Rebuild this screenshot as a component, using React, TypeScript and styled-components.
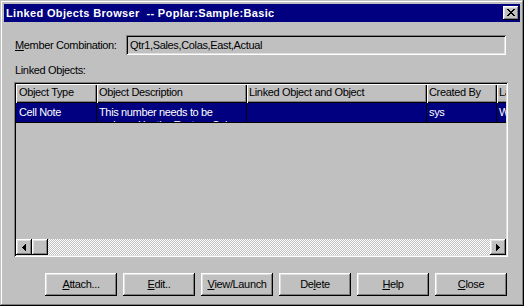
import React from "react";
import styled, { createGlobalStyle } from "styled-components";

const Global = createGlobalStyle`
  html, body { margin: 0; padding: 0; background: #c0c0c0; }
  body {
    font-family: "Liberation Sans", Arial, sans-serif;
    font-size: 11px;
    letter-spacing: -0.35px;
    color: #000;
  }
  * { box-sizing: border-box; }
`;

const raised = `
  box-shadow: inset -1px -1px #000, inset 1px 1px #fff, inset -2px -2px #808080, inset 2px 2px #dfdfdf;
`;
const sunken = `
  box-shadow: inset 1px 1px #808080, inset -1px -1px #fff, inset 2px 2px #000, inset -2px -2px #dfdfdf;
`;

const Window = styled.div`
  width: 524px;
  height: 306px;
  background: #c0c0c0;
  padding: 4px;
  display: flex;
  flex-direction: column;
  box-shadow: inset -1px -1px #000, inset 1px 1px #c0c0c0, inset -2px -2px #808080, inset 2px 2px #fff;
`;

const TitleBar = styled.div`
  height: 18px;
  background: #000080;
  color: #fff;
  display: flex;
  align-items: center;
  padding: 0 1px 0 2px;
`;

const TitleText = styled.div`
  flex: 1;
  font-weight: bold;
  letter-spacing: 0.35px;
  white-space: pre;
  line-height: 18px;
`;

const CloseButton = styled.div`
  width: 16px;
  height: 14px;
  background: #c0c0c0;
  ${raised}
  display: flex;
  align-items: center;
  justify-content: center;
  padding: 0 1px 1px 0;
`;

const Body = styled.div`
  flex: 1;
  display: flex;
  flex-direction: column;
  padding: 0 12px 0 10px;
`;

const MemberRow = styled.div`
  display: flex;
  align-items: center;
  height: 20px;
  margin-top: 13px;
`;

const FieldLabel = styled.div`
  width: 112px;
  padding-left: 1px;
  line-height: 13px;
`;

const Field = styled.div`
  width: 380px;
  height: 20px;
  ${sunken}
  background: #c0c0c0;
  display: flex;
  align-items: center;
  padding-left: 4px;
  line-height: 13px;
`;

const SectionLabel = styled.div`
  margin: 9px 0 5px 1px;
  line-height: 13px;
`;

const ListView = styled.div`
  width: 494px;
  height: 175px;
  padding: 2px;
  ${sunken}
  display: flex;
  flex-direction: column;
`;

const ListContent = styled.div`
  flex: 1;
  overflow: hidden;
  background: #c0c0c0;
`;

const HeaderRow = styled.div`
  display: flex;
  height: 19px;
`;

const HeaderCell = styled.div<{ $w: number; $pad: number }>`
  flex: 0 0 ${(p) => p.$w}px;
  height: 19px;
  padding-left: ${(p) => p.$pad}px;
  line-height: 16px;
  white-space: nowrap;
  overflow: hidden;
  background: #c0c0c0;
  box-shadow: inset 1px 1px #fff, inset -1px -1px #000, inset -2px -2px #808080;
`;

const DataRow = styled.div<{ $selected: boolean }>`
  display: flex;
  height: 20px;
  background: ${(p) => (p.$selected ? "#000080" : "transparent")};
  color: ${(p) => (p.$selected ? "#fff" : "#000")};
  border-bottom: 1px solid #000;
`;

const DataCell = styled.div<{ $w: number; $pad: number }>`
  flex: 0 0 ${(p) => p.$w}px;
  height: 19px;
  padding: 3px 0 0 ${(p) => p.$pad}px;
  line-height: 13px;
  overflow: hidden;
  border-right: 1px solid #000;
`;

const ScrollBar = styled.div`
  height: 16px;
  display: flex;
`;

const ScrollButton = styled.div`
  width: 16px;
  height: 16px;
  background: #c0c0c0;
  ${raised}
  display: flex;
  align-items: center;
  justify-content: center;
`;

const Track = styled.div`
  flex: 1;
  background: repeating-conic-gradient(#fff 0 25%, #c0c0c0 0 50%) 0 0 / 2px 2px;
`;

const ButtonRow = styled.div`
  display: flex;
  gap: 6px;
  margin-top: 16px;
  padding-left: 31px;
`;

const PushButton = styled.div`
  width: 72px;
  height: 23px;
  background: #c0c0c0;
  ${raised}
  display: flex;
  align-items: center;
  justify-content: center;
  line-height: 13px;
  padding-bottom: 1px;
`;

const columns = [
  { title: "Object Type", w: 81, pad: 3 },
  { title: "Object Description", w: 150, pad: 2 },
  { title: "Linked Object and Object", w: 180, pad: 2 },
  { title: "Created By", w: 70, pad: 2 },
  { title: "Last Modified", w: 100, pad: 2 },
];

const rows = [
  [
    "Cell Note",
    "This number needs to be reviewed by the Eastern Colas team",
    "",
    "sys",
    "Wed Jun 10",
  ],
];

const CloseGlyph = () => (
  <svg width="8" height="7" viewBox="0 0 8 7" shapeRendering="crispEdges">
    <path
      d="M0 0h2v1H0zM6 0h2v1H6zM1 1h2v1H1zM5 1h2v1H5zM2 2h4v1H2zM3 3h2v1H3zM2 4h4v1H2zM1 5h2v1H1zM5 5h2v1H5zM0 6h2v1H0zM6 6h2v1H6z"
      fill="#000"
    />
  </svg>
);

const Arrow = ({ dir }: { dir: "left" | "right" }) => (
  <svg width="4" height="7" viewBox="0 0 4 7" shapeRendering="crispEdges">
    <path
      d={
        dir === "left"
          ? "M3 0h1v7H3zM2 1h1v5H2zM1 2h1v3H1zM0 3h1v1H0z"
          : "M0 0h1v7H0zM1 1h1v5H1zM2 2h1v3H2zM3 3h1v1H3z"
      }
      fill="#000"
    />
  </svg>
);

const buttons: { pre: string; key: string; post: string }[] = [
  { pre: "", key: "A", post: "ttach..." },
  { pre: "", key: "E", post: "dit.." },
  { pre: "", key: "V", post: "iew/Launch" },
  { pre: "De", key: "l", post: "ete" },
  { pre: "", key: "H", post: "elp" },
  { pre: "", key: "C", post: "lose" },
];

export default function App() {
  return (
    <>
      <Global />
      <Window>
        <TitleBar>
          <TitleText>{"Linked Objects Browser  -- Poplar:Sample:Basic"}</TitleText>
          <CloseButton>
            <CloseGlyph />
          </CloseButton>
        </TitleBar>
        <Body>
          <MemberRow>
            <FieldLabel>
              <u>M</u>ember Combination:
            </FieldLabel>
            <Field>Qtr1,Sales,Colas,East,Actual</Field>
          </MemberRow>
          <SectionLabel>Linked Objects:</SectionLabel>
          <ListView>
            <ListContent>
              <HeaderRow>
                {columns.map((c) => (
                  <HeaderCell key={c.title} $w={c.w} $pad={c.pad}>
                    {c.title}
                  </HeaderCell>
                ))}
              </HeaderRow>
              {rows.map((r, i) => (
                <DataRow key={i} $selected={i === 0}>
                  {r.map((v, j) => (
                    <DataCell key={j} $w={columns[j].w} $pad={columns[j].pad}>
                      {v}
                    </DataCell>
                  ))}
                </DataRow>
              ))}
            </ListContent>
            <ScrollBar>
              <ScrollButton>
                <Arrow dir="left" />
              </ScrollButton>
              <ScrollButton />
              <Track />
              <ScrollButton>
                <Arrow dir="right" />
              </ScrollButton>
            </ScrollBar>
          </ListView>
          <ButtonRow>
            {buttons.map((b) => (
              <PushButton key={b.key + b.post}>
                {b.pre}
                <u>{b.key}</u>
                {b.post}
              </PushButton>
            ))}
          </ButtonRow>
        </Body>
      </Window>
    </>
  );
}
